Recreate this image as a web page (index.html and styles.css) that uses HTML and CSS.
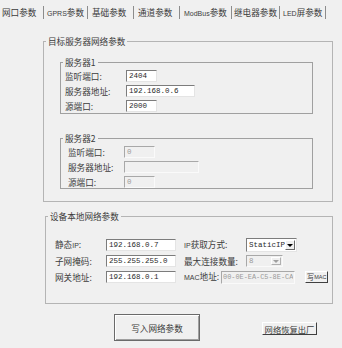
FILE: index.html
```html
<!DOCTYPE html>
<html lang="zh-CN">
<head>
    <meta charset="UTF-8">
    <title>网口参数</title>
    <link rel="stylesheet" href="styles.css">
</head>
<body>
    <div class="tabs">
        <div class="tab tab-1">网口参数</div>
        <div class="tab tab-2"><span class="en">GPRS</span>参数</div>
        <div class="tab tab-3">基础参数</div>
        <div class="tab tab-4">通道参数</div>
        <div class="tab tab-5"><span class="en">ModBus</span>参数</div>
        <div class="tab tab-6">继电器参数</div>
        <div class="tab tab-7"><span class="en">LED</span>屏参数</div>
    </div>

    <div class="panel">
        <fieldset class="group group-server">
            <legend>目标服务器网络参数</legend>
            <div class="group-body">
                <fieldset class="box box-1">
                    <legend>服务器1</legend>
                    <div class="box-body">
                        <div class="row">
                            <span class="label">监听端口:</span>
                            <input class="field w-short" value="2404">
                        </div>
                        <div class="row">
                            <span class="label">服务器地址:</span>
                            <input class="field w-long" value="192.168.0.6">
                        </div>
                        <div class="row">
                            <span class="label">源端口:</span>
                            <input class="field w-short" value="2000">
                        </div>
                    </div>
                </fieldset>

                <fieldset class="box box-2">
                    <legend>服务器2</legend>
                    <div class="box-body">
                        <div class="row">
                            <span class="label">监听端口:</span>
                            <input class="field w-short" value="0" disabled>
                        </div>
                        <div class="row">
                            <span class="label">服务器地址:</span>
                            <input class="field w-long" value="" disabled>
                        </div>
                        <div class="row">
                            <span class="label">源端口:</span>
                            <input class="field w-short" value="0" disabled>
                        </div>
                    </div>
                </fieldset>
            </div>
        </fieldset>

        <fieldset class="group group-local">
            <legend>设备本地网络参数</legend>
            <div class="group-body">
                <div class="row">
                    <span class="label">静态<span class="en">IP</span>:</span>
                    <input class="field w-ip" value="192.168.0.7">
                    <span class="label label-2"><span class="en">IP</span>获取方式:</span>
                    <div class="combo">
                        <span class="combo-text">StaticIP</span>
                        <span class="combo-btn"><i class="arrow"></i></span>
                    </div>
                </div>
                <div class="row">
                    <span class="label">子网掩码:</span>
                    <input class="field w-ip" value="255.255.255.0">
                    <span class="label label-2">最大连接数量:</span>
                    <div class="combo combo-off">
                        <span class="combo-text">8</span>
                        <span class="combo-btn"><i class="arrow"></i></span>
                    </div>
                </div>
                <div class="row">
                    <span class="label">网关地址:</span>
                    <input class="field w-ip" value="192.168.0.1">
                    <span class="label label-mac"><span class="en">MAC</span>地址:</span>
                    <input class="field w-mac" value="00-0E-EA-C5-8E-CA" disabled>
                    <button class="btn btn-mac">写<span class="en">MAC</span></button>
                </div>
            </div>
        </fieldset>
    </div>

    <div class="actions">
        <button class="btn btn-write">写入网络参数</button>
        <button class="btn btn-reset">网络恢复出厂</button>
    </div>
</body>
</html>
```

FILE: styles.css
```css
* {
    margin: 0;
    padding: 0;
    box-sizing: border-box;
}

body {
    width: 342px;
    height: 348px;
    overflow: hidden;
    background: #f0f0f0;
    color: #3c3c3c;
    font-family: "Noto Sans CJK SC", "Noto Sans", sans-serif;
    font-size: 8.6px;
    line-height: 12px;
}

.en {
    font-family: "Liberation Sans", sans-serif;
    font-size: 7px;
}

/* tab strip */
.tabs {
    display: flex;
    height: 20px;
}

.tab {
    margin-top: 6px;
    height: 13px;
    line-height: 13px;
    padding-left: 3px;
    border-right: 1px solid #8c8c8c;
    white-space: nowrap;
}

.tab-1 { width: 44px; padding-left: 2px; }
.tab-2 { width: 44px; }
.tab-3 { width: 46px; padding-left: 4px; }
.tab-4 { width: 46px; padding-left: 4px; }
.tab-5 { width: 52px; padding-left: 4px; }
.tab-6 { width: 48px; padding-left: 2px; }
.tab-7 { width: 46px; }

/* group boxes */
.panel {
    padding: 15px 0 0 43px;
}

fieldset {
    border: 1px solid #b4b4b4;
    min-inline-size: 0;
}

legend {
    margin-left: 2px;
    padding: 0 2px;
    line-height: 12px;
}

.group-server {
    width: 290px;
}

.group-server > .group-body {
    padding: 9px 19px 12px 16px;
}

.box {
    border-color: #a0a0a0;
}

.box-2 {
    margin-top: 18px;
}

.box-body {
    display: flex;
    flex-direction: column;
    gap: 3px;
    padding: 2px 0 1px 4px;
}

.box-2 .box-body {
    padding: 2px 0 0 7px;
}

.row {
    display: flex;
    align-items: center;
}

.box-body .row {
    height: 12px;
}

.box-1 .label { width: 61px; }
.box-2 .label { width: 56px; }

.group-local {
    width: 288px;
    margin: 8px 0 0 2px;
}

.group-local > .group-body {
    display: flex;
    flex-direction: column;
    gap: 2px;
    padding: 16px 0 19px 9px;
}

.group-local .row {
    height: 14px;
}

.group-local .label { width: 51px; }
.group-local .label-2 { width: 62px; margin-left: 8px; }
.group-local .label-mac { width: 37px; margin-left: 8px; }

/* inputs */
.field {
    height: 12px;
    padding: 0 2px;
    background: #fff;
    border: 1px solid;
    border-color: #7c7c7c #e4e4e4 #e4e4e4 #7c7c7c;
    font-family: "Liberation Mono", monospace;
    font-size: 7.5px;
    color: #2a2a2a;
    outline: none;
}

.field:disabled {
    background: #f0f0f0;
    border-color: #a8a8a8 #fafafa #fafafa #a8a8a8;
    color: #9a9a9a;
}

.w-short { width: 31px; }
.w-long { width: 69px; }
.box-2 .w-long { width: 75px; }
.w-ip { width: 70px; }
.w-mac {
    width: 74px;
    height: 13px;
    padding: 0 1px;
    font-size: 6.9px;
}

/* combo boxes */
.combo {
    display: flex;
    align-items: center;
    width: 51px;
    height: 14px;
    padding: 1px;
    background: #fff;
    border: 1px solid;
    border-color: #7c7c7c #e4e4e4 #e4e4e4 #7c7c7c;
}

.combo-text {
    flex: 1;
    padding-left: 1px;
    font-family: "Liberation Mono", monospace;
    font-size: 7.5px;
    line-height: 10px;
    color: #2a2a2a;
}

.combo-btn {
    display: flex;
    align-items: center;
    justify-content: center;
    width: 10px;
    height: 10px;
    background: #f0f0f0;
    border: 1px solid;
    border-color: #fff #6a6a6a #6a6a6a #fff;
}

.arrow {
    width: 0;
    height: 0;
    border-left: 3px solid transparent;
    border-right: 3px solid transparent;
    border-top: 3px solid #000;
}

.combo-off {
    width: 37px;
    height: 12px;
    background: #f0f0f0;
    border-color: #a8a8a8 #fafafa #fafafa #a8a8a8;
}

.combo-off .combo-text {
    color: #9a9a9a;
}

.combo-off .combo-btn {
    height: 8px;
    border-color: #fff #b0b0b0 #b0b0b0 #fff;
}

.combo-off .arrow {
    border-top-color: #a0a0a0;
}

/* buttons */
.btn {
    display: flex;
    align-items: center;
    justify-content: center;
    background: #f0f0f0;
    font-family: inherit;
    font-size: 8.6px;
    color: #3c3c3c;
    line-height: 10px;
    white-space: nowrap;
    cursor: pointer;
}

.btn-mac {
    width: 23px;
    height: 12px;
    margin-left: 10px;
    border: 1px solid;
    border-color: #fff #404040 #404040 #fff;
    font-size: 7.5px;
    overflow: hidden;
}

.btn-mac .en {
    font-size: 5.5px;
}

.actions {
    display: flex;
    align-items: center;
    padding: 10px 0 0 114px;
}

.btn-write {
    width: 86px;
    height: 27px;
    border: 1px solid #6a6a6a;
    box-shadow: inset 1px 1px #fff, inset -1px -1px #a0a0a0;
}

.btn-reset {
    width: 55px;
    height: 13px;
    margin: 2px 0 0 62px;
    border: 1px solid;
    border-color: #fff #404040 #404040 #fff;
    font-size: 8.3px;
    overflow: hidden;
}
```
